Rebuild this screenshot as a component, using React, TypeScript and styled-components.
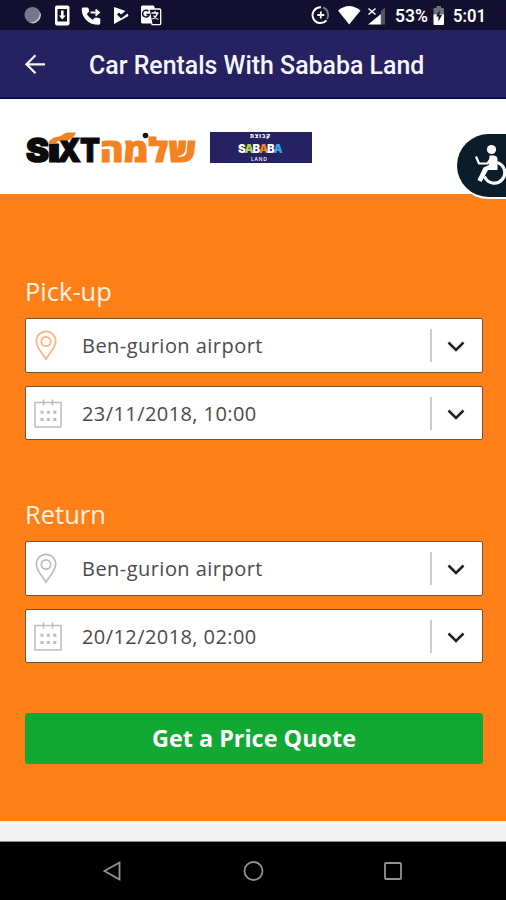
import React from "react";
import styled, { createGlobalStyle } from "styled-components";

const GlobalStyle = createGlobalStyle`
  * { box-sizing: border-box; }
  body { margin: 0; background: #000; }
  svg { display: block; flex: none; }
`;

const Screen = styled.div`
  position: relative;
  width: 506px;
  height: 900px;
  display: flex;
  flex-direction: column;
  overflow: hidden;
  background: #fff;
  font-family: "Open Sans", "Noto Sans", sans-serif;
`;

const StatusBar = styled.div`
  flex: none;
  height: 30px;
  display: flex;
  justify-content: space-between;
  background: #12102e;
`;

const TitleBar = styled.header`
  flex: none;
  height: 69px;
  display: flex;
  align-items: center;
  padding: 0 0 0 24px;
  gap: 43px;
  background: #262161;
  border-bottom: 2px solid #0d0952;
`;

const Title = styled.h1`
  margin: 4px 0 0;
  font: 500 24.9px/32px Roboto, sans-serif;
  color: #f6f5fb;
  white-space: nowrap;
`;

const Brands = styled.div`
  flex: none;
  height: 95px;
  display: flex;
  align-items: flex-start;
  padding: 23px 0 0 25px;
  gap: 11px;
  background: #fff;
`;

const BrandTile = styled.div`
  margin-top: 10px;
`;

const Form = styled.main`
  flex: none;
  height: 627px;
  padding: 81px 23px 0 25px;
  background: #ff7f19;
`;

const Group = styled.section`
  height: 223px;
  display: flex;
  flex-direction: column;
`;

const Label = styled.h2`
  margin: 0 0 11px;
  font-size: 25.5px;
  line-height: 32px;
  font-weight: 400;
  color: #fff3e4;
`;

const Field = styled.div`
  height: 54.5px;
  margin-bottom: 13.3px;
  display: flex;
  align-items: center;
  padding: 1px 17px 0 8px;
  background: #fff;
  border: 1.5px solid #6d5438;
  border-radius: 2px;
`;

const Value = styled.span<{ $spacing: number }>`
  flex: 1;
  margin-left: 18px;
  padding-top: 1px;
  font-size: 20px;
  line-height: 28px;
  font-weight: 400;
  letter-spacing: ${(p) => p.$spacing}px;
  color: #4b4b4b;
  white-space: nowrap;
`;

const Divider = styled.i`
  width: 2px;
  height: 33px;
  margin-right: 15px;
  background: #cbcbcb;
`;

const Quote = styled.button`
  width: 458px;
  height: 51px;
  display: block;
  margin: -8px 0 0;
  padding: 0 0 1px;
  border: 0;
  border-radius: 3px;
  background: #12a932;
  color: #fff;
  font: 700 23.4px/32px "Open Sans", sans-serif;
`;

const FooterStrip = styled.div`
  flex: none;
  height: 21px;
  background: #f3f3f3;
  border-bottom: 1px solid #8b8b8b;
`;

const NavBar = styled.nav`
  flex: 1;
  display: flex;
  justify-content: center;
  gap: 118px;
  padding: 18px 0 0;
  background: #000;
`;

const AccessBadge = styled.div`
  position: absolute;
  right: 0;
  top: 132px;
  width: 51px;
  height: 67px;
  padding: 9px 0 0 18px;
  border: 2px solid #fff;
  border-right: 0;
  border-radius: 34px 0 0 34px;
  background: #0b1c2b;
  overflow: hidden;
`;

const StatusLeft = () => (
  <svg width="180" height="30" fill="#fff">
    <circle cx="32.5" cy="15" r="8" fill="#77768b" />
    <path d="M39.5 11a8 8 0 0 1-11 11 9 9 0 0 0 11-11z" fill="#c9c8d4" />
    <rect x="55" y="5.5" width="14.5" height="20" rx="2" />
    <rect x="57.5" y="9" width="9.5" height="12.5" fill="#12102e" />
    <path d="M61 10.500h2.600v5h2.200l-3.500 4-3.500-4H61z" />
    <path d="M83.500 7.500c-1 0-1.800.7-1.800 1.700 0 8.700 7 15.600 16.800 15.600 1 0 1.800-.8 1.800-1.800v-3.400c0-.8-.5-1.400-1.300-1.500l-3.100-.6c-.5-.1-1 .1-1.400.5l-1.700 1.700c-2.600-1.300-4.600-3.200-5.900-5.700l1.800-1.900c.4-.4.5-.8.4-1.400l-.6-2.500c-.2-.5-.6-.7-1.200-.7z" />
    <path d="M90.500 12.500h7M95.500 9.500l3.500 3-3.500 3" fill="none" stroke="#fff" strokeWidth="1.8" />
    <path d="M114 7v17l14.500-8-1-2.500-6.500 5-4-4 2-2 2 2 4.500-3.500z" />
    <rect x="141" y="5.5" width="13.5" height="18" rx="1.5" />
    <path d="M149 9h10.500q1.200 0 1.200 1.200v13.300q0 1.200-1.200 1.200H152z" fill="#12102e" stroke="#fff" strokeWidth="1.3" />
    <path d="M148.500 11.300a3.400 3.400 0 1 0 .8 3.200h-3" fill="none" stroke="#12102e" strokeWidth="1.5" />
    <path d="M151.500 13h7M155 11v2M157.500 13q-1 4-5 6M153.500 15.500q1.500 3 5 4" fill="none" stroke="#fff" strokeWidth="1.3" />
  </svg>
);

const StatusRight = () => (
  <svg width="200" height="30" fill="#fff" fontFamily="Roboto, sans-serif" fontWeight="600" fontSize="17.5">
    <path d="M15 7.300a7.900 7.900 0 1 0 5.500 13" fill="none" stroke="#fff" strokeWidth="2" />
    <path d="M17 7.500a7.900 7.900 0 0 1 4 11.500" fill="none" stroke="#777589" strokeWidth="2" />
    <path d="M14.800 11.500v7M11.300 15h7" stroke="#fff" strokeWidth="1.8" />
    <path d="M32 10.500Q43 1.500 54.500 10.500L43.200 24.500z" />
    <path d="M75 24.500V14L62 24.500z" />
    <path d="M74.800 11l4.200-3.500v17h-4.200z" fill="#54526b" />
    <path d="M62.500 8.500l7 6M69.500 8.500l-7 6" stroke="#fff" strokeWidth="1.5" />
    <text x="89" y="22" textLength="33" lengthAdjust="spacingAndGlyphs">53%</text>
    <path d="M127.500 9q0-1 1-1h2V6h4.500v2h2q1 0 1 1v6h-10.500z" fill="#6f6e7f" />
    <path d="M127.500 14.500H138V24q0 1-1 1h-8.500q-1 0-1-1z" />
    <path d="M133.500 10.500l-3.500 6h2.500v5l3.500-6.500h-2.500z" fill="#12102e" />
    <text x="147" y="22" textLength="33" lengthAdjust="spacingAndGlyphs">5:01</text>
  </svg>
);

const BackArrow = () => (
  <svg width="22" height="22" fill="none" stroke="#f4f3fa" strokeWidth="2.3">
    <path d="M21 11.300H3M11.500 2.300L2.500 11.300l9 9" />
  </svg>
);

const SixtLogo = () => (
  <svg width="174" height="54" fontWeight="900">
    <g fill="#0b0b0b" stroke="#0b0b0b" fontFamily="Inter, sans-serif" fontSize="33">
      <text x="1" y="40" strokeWidth="1.5" textLength="23" lengthAdjust="spacingAndGlyphs">S</text>
      <text x="22.500" y="40" strokeWidth="1" textLength="13" lengthAdjust="spacingAndGlyphs">ı</text>
      <text x="32" y="40" strokeWidth="1" textLength="24" lengthAdjust="spacingAndGlyphs">X</text>
      <text x="55" y="40" strokeWidth="1" textLength="20" lengthAdjust="spacingAndGlyphs">T</text>
    </g>
    <path d="M23 21.500Q26 15.500 31.500 15q4-.5 6.500-2.500 2.500-2 5-2h8Q48 17.500 42 18.500h-7q-2.500 0-4.500 3z" fill="#f58220" />
    <text x="75" y="39.5" fontSize="33" fill="#f58220" stroke="#f58220" strokeWidth="1" textLength="96" lengthAdjust="spacingAndGlyphs" fontFamily="'Open Sans', 'DejaVu Sans', sans-serif">שלמה</text>
    <circle cx="120.5" cy="13.5" r="2.8" fill="#151515" />
  </svg>
);

const SababaLogo = () => (
  <svg width="102" height="31" fontFamily="'Open Sans', sans-serif" fontWeight="800" fill="#fff">
    <rect width="102" height="31" fill="#262161" />
    <text x="40" y="6" fontSize="5.5" textLength="20">קבוצת</text>
    <text y="20.500" fontSize="11.5" fontFamily="Inter, sans-serif" fontWeight="900">
      <tspan x="28">S</tspan>
      <tspan x="34.500" fill="#a8d54c">A</tspan>
      <tspan x="42.500">B</tspan>
      <tspan x="49" fill="#f58220">A</tspan>
      <tspan x="57">B</tspan>
      <tspan x="63.500" fill="#32a7e1">A</tspan>
    </text>
    <text x="41" y="29" fontSize="5" textLength="16" fontWeight="600">LAND</text>
  </svg>
);

const Pin = ({ color }: { color: string }) => (
  <svg width="30" height="32" fill="none" stroke={color} strokeWidth="1.7">
    <path d="M12 29C9 24 2.300 18 2.300 11a9.700 9.700 0 0 1 19.400 0C21.700 18 15 24 12 29z" />
    <circle cx="12" cy="11.500" r="4.700" />
  </svg>
);

const Calendar = () => (
  <svg width="30" height="32" fill="none" stroke="#bdbdbd" strokeWidth="1.5">
    <rect x="1" y="4.500" width="26" height="24.500" />
    <path d="M9.500 1.500v6M18.500 1.500v6" />
    <path d="M6.500 14.300h3M12.800 14.300h3M19.300 14.300h3M6.500 21.500h3M12.800 21.500h3M19.300 21.500h3" strokeWidth="3" />
  </svg>
);

const Chevron = () => (
  <svg width="18" height="12" fill="none" stroke="#202020" strokeWidth="2.5">
    <path d="M1.500 2.500l7.500 7.500L16.500 2.500" />
  </svg>
);

const Wheelchair = () => (
  <svg width="31" height="46" fill="none" stroke="#fff" strokeLinejoin="round">
    <circle cx="16.500" cy="6.500" r="4.600" fill="#fff" stroke="none" />
    <path d="M14.500 12.500h4.500q3.500.5 3.500 4V27H13L6.500 39l-4-2L8.500 24.500 14 22z" fill="#fff" stroke="none" />
    <path d="M16 15.500L12.500 20.500H4L1 13.500" strokeWidth="2.2" />
    <path d="M22 19.500a10.500 10.500 0 1 1-12.500 14" strokeWidth="3.2" />
  </svg>
);

type TripGroup = { label: string; place: string; time: string; pin: string };

const trips: TripGroup[] = [
  { label: "Pick-up", place: "Ben-gurion airport", time: "23/11/2018, 10:00", pin: "#ffb27c" },
  { label: "Return", place: "Ben-gurion airport", time: "20/12/2018, 02:00", pin: "#bdbdbd" },
];

export default function App() {
  return (
    <Screen>
      <GlobalStyle />
      <StatusBar>
        <StatusLeft />
        <StatusRight />
      </StatusBar>
      <TitleBar>
        <BackArrow />
        <Title>Car Rentals With Sababa Land</Title>
      </TitleBar>
      <Brands>
        <SixtLogo />
        <BrandTile>
          <SababaLogo />
        </BrandTile>
      </Brands>
      <Form>
        {trips.map((trip) => (
          <Group key={trip.label}>
            <Label>{trip.label}</Label>
            <Field>
              <Pin color={trip.pin} />
              <Value $spacing={0.46}>{trip.place}</Value>
              <Divider />
              <Chevron />
            </Field>
            <Field>
              <Calendar />
              <Value $spacing={0.42}>{trip.time}</Value>
              <Divider />
              <Chevron />
            </Field>
          </Group>
        ))}
        <Quote>Get a Price Quote</Quote>
      </Form>
      <FooterStrip />
      <NavBar>
        <svg width="22" height="22" fill="none" stroke="#929292" strokeWidth="1.8">
          <path d="M17.500 2.500v17L2.500 11z" />
        </svg>
        <svg width="22" height="22" fill="none" stroke="#929292" strokeWidth="1.8">
          <circle cx="11.500" cy="11" r="9" />
        </svg>
        <svg width="22" height="22" fill="none" stroke="#929292" strokeWidth="1.8">
          <rect x="3" y="3" width="16" height="16" rx="1" />
        </svg>
      </NavBar>
      <AccessBadge>
        <Wheelchair />
      </AccessBadge>
    </Screen>
  );
}
